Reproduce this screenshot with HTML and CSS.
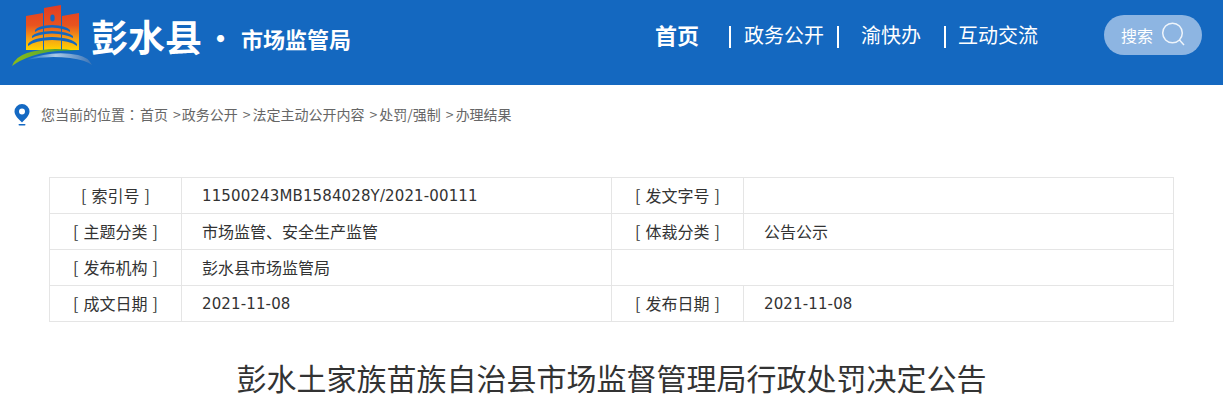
FILE: index.html
```html
<!DOCTYPE html>
<html lang="zh-CN">
<head>
<meta charset="utf-8">
<title>彭水土家族苗族自治县市场监督管理局行政处罚决定公告</title>
<link rel="stylesheet" href="styles.css">
</head>
<body>
<header class="top">
  <div class="brand">
    <svg class="logo" width="92" height="68" viewBox="0 0 92 68" aria-hidden="true">
      <defs>
        <linearGradient id="bld" gradientUnits="userSpaceOnUse" x1="0" y1="5" x2="0" y2="50">
          <stop offset="0" stop-color="#e23c22"/>
          <stop offset=".45" stop-color="#e8541f"/>
          <stop offset=".75" stop-color="#f5a015"/>
          <stop offset="1" stop-color="#ffd400"/>
        </linearGradient>
        <linearGradient id="grn" x1="0" y1="0" x2="1" y2="0">
          <stop offset="0" stop-color="#8cbc18"/>
          <stop offset=".55" stop-color="#5fab2e"/>
          <stop offset="1" stop-color="#138a55"/>
        </linearGradient>
        <linearGradient id="sky" x1="0" y1="0" x2="1" y2="0">
          <stop offset="0" stop-color="#1468c0"/>
          <stop offset=".45" stop-color="#a9c9e6"/>
          <stop offset="1" stop-color="#3c74b6"/>
        </linearGradient>
      </defs>
      <path d="M26 16 L43 13 V50 H26Z" fill="url(#bld)"/>
      <path d="M44 8 L61 5 V50 H44Z" fill="url(#bld)"/>
      <path d="M62 16 L79 13 V50 H62Z" fill="url(#bld)"/>
      <ellipse cx="52.500" cy="18" rx="2.200" ry="3.400" fill="#1468c0"/>
      <path d="M35 30 Q38 25.500 52 25 Q66 25.500 70 30 L70 32 Q64 28 52 27.500 Q40 28 35 32Z" fill="#1468c0"/>
      <path d="M32 36 Q36 31.500 52 31 Q68 31.500 73 36 L73 38 Q66 34 52 33.500 Q38 34 32 38Z" fill="#1468c0"/>
      <path d="M28 44 Q32 37.500 52 37 Q72 37.500 77 44 L77 46 Q70 40.500 52 40 Q35 40.500 28 46Z" fill="#1468c0"/>
      <path d="M43.500 13 V50 M61.500 13 V50" stroke="#1468c0" stroke-width="1"/>
      <path d="M12 66 Q15 57 27 53 Q50 46 78 51 Q50 49.500 32 56 Q20 60 12 66Z" fill="url(#grn)"/>
      <path d="M26 60 Q52 50 78 55 Q88 57 92 65 Q86 60 70 58 Q48 55 26 60Z" fill="url(#sky)"/>
    </svg>
    <span class="county">彭水县</span>
    <span class="dot">·</span>
    <span class="bureau">市场监管局</span>
  </div>
  <nav class="nav">
    <a class="nav-home">首页</a>
    <i class="bar bar-first"></i>
    <a class="nav-a">政务公开</a>
    <i class="bar bar-second"></i>
    <a class="nav-b">渝快办</a>
    <i class="bar bar-third"></i>
    <a class="nav-c">互动交流</a>
  </nav>
  <div class="search">
    <span class="search-text">搜索</span>
    <svg width="26" height="26" viewBox="0 0 26 26" aria-hidden="true">
      <circle cx="11.500" cy="11" r="9.800" fill="none" stroke="#fff" stroke-opacity=".85" stroke-width="1.500"/>
      <path d="M18.500 18 L23 23" stroke="#fff" stroke-opacity=".85" stroke-width="1.500"/>
    </svg>
  </div>
</header>

<div class="crumbs">
  <svg class="pin" width="16" height="22" viewBox="0 0 16 22" aria-hidden="true">
    <path fill-rule="evenodd" d="M8 0 A7.500 7.500 0 0 1 15.500 7.500 C15.500 11.500 11 15.500 8 18.500 C5 15.500 .5 11.500 .5 7.500 A7.500 7.500 0 0 1 8 0Z M8 4.500 A3 3 0 1 0 8 10.500 A3 3 0 1 0 8 4.500Z" fill="#1469c3"/>
    <rect x="4.500" y="20" width="7" height="1.600" rx=".8" fill="#1469c3"/>
  </svg>
  <span class="trail">您当前的位置<span class="colon" lang="zh-TW">：</span><span class="first">首页</span><span class="step step-tight">&gt;</span>政务公开<span class="step">&gt;</span>法定主动公开内容<span class="step">&gt;</span>处罚/强制<span class="step">&gt;</span>办理结果</span>
</div>

<table class="meta">
  <colgroup><col class="c1"><col class="c2"><col class="c3"><col class="c4"></colgroup>
  <tr>
    <th>[ 索引号 ]</th><td><span class="num">11500243MB1584028Y/2021-00111</span></td>
    <th>[ 发文字号 ]</th><td></td>
  </tr>
  <tr>
    <th>[ 主题分类 ]</th><td>市场监管、安全生产监管</td>
    <th>[ 体裁分类 ]</th><td>公告公示</td>
  </tr>
  <tr>
    <th>[ 发布机构 ]</th><td>彭水县市场监管局</td>
    <td colspan="2"></td>
  </tr>
  <tr>
    <th>[ 成文日期 ]</th><td><span class="num">2021-11-08</span></td>
    <th>[ 发布日期 ]</th><td><span class="num">2021-11-08</span></td>
  </tr>
</table>

<h1 class="title">彭水土家族苗族自治县市场监督管理局行政处罚决定公告</h1>
</body>
</html>
```

FILE: styles.css
```css
* { box-sizing: border-box; }
html, body { margin: 0; padding: 0; height: 408px; overflow: hidden; background: #fff; }
body { font-family: "Noto Sans CJK SC", "Microsoft YaHei", "Liberation Sans", sans-serif; color: #333; }

.top {
  height: 85px;
  background: #1468c0;
  color: #fff;
  display: flex;
  align-items: flex-start;
}
.brand { display: flex; align-items: flex-start; width: 655px; }
.logo { flex: none; }
.county { font-size: 37px; font-weight: 700; line-height: 40px; margin: 16px 0 0 -1px; }
.dot { font-size: 28px; font-weight: 700; line-height: 30px; width: 37px; text-align: center; margin-top: 23px; }
.bureau { font-size: 22px; font-weight: 700; line-height: 30px; margin: 23px 0 0 2px; }

.nav { display: flex; align-items: center; height: 30px; margin-top: 20px; width: 449px; font-size: 20px; }
.nav a { line-height: 30px; white-space: nowrap; }
.nav-home { font-size: 22px; font-weight: 700; margin-top: -2px; }
.bar { display: block; width: 2px; height: 22px; background: #fff; margin-top: 4px; }
.bar-first { margin-left: 30px; }
.nav-a { margin-left: 13px; }
.bar-second { margin-left: 13px; }
.nav-b { margin-left: 22px; }
.bar-third { margin-left: 23px; }
.nav-c { margin-left: 12px; }

.search {
  width: 98px;
  height: 40px;
  margin-top: 15px;
  border-radius: 20px;
  background: #8db5e2;
  display: flex;
  align-items: center;
  padding-left: 17px;
  gap: 8px;
}
.search-text { font-size: 16px; line-height: 20px; }

.crumbs {
  display: flex;
  align-items: center;
  height: 24px;
  margin-top: 18px;
  padding-left: 14px;
  font-size: 14px;
  line-height: 24px;
  color: #666;
}
.pin { flex: none; margin-right: 11px; }
.trail { white-space: nowrap; margin-top: -2px; }
.colon { font-family: "Noto Sans CJK TC", sans-serif; }
.first { margin-left: 1px; }
.step { margin: 0 2px 0 5px; }
.step-tight { margin-right: 1px; }

.meta {
  border-collapse: collapse;
  table-layout: fixed;
  width: 1124px;
  margin: 50px 0 0 49px;
  font-size: 16px;
  color: #333;
}
.c1 { width: 132px; }
.c2 { width: 430px; }
.c3 { width: 132px; }
.c4 { width: 430px; }
.meta th, .meta td {
  height: 36px;
  padding: 0 0 2px;
  border: 1px solid #e5e5e5;
  line-height: 24px;
  font-weight: 400;
  white-space: nowrap;
}
.meta th { text-align: center; word-spacing: 1.500px; }
.meta td { padding-left: 20px; }
.num { font-family: "DejaVu Sans", sans-serif; font-size: 15px; letter-spacing: .13px; }

.title {
  margin: 33px 0 0;
  text-align: center;
  font-size: 30px;
  font-weight: 400;
  line-height: 44px;
  color: #333;
}
```
